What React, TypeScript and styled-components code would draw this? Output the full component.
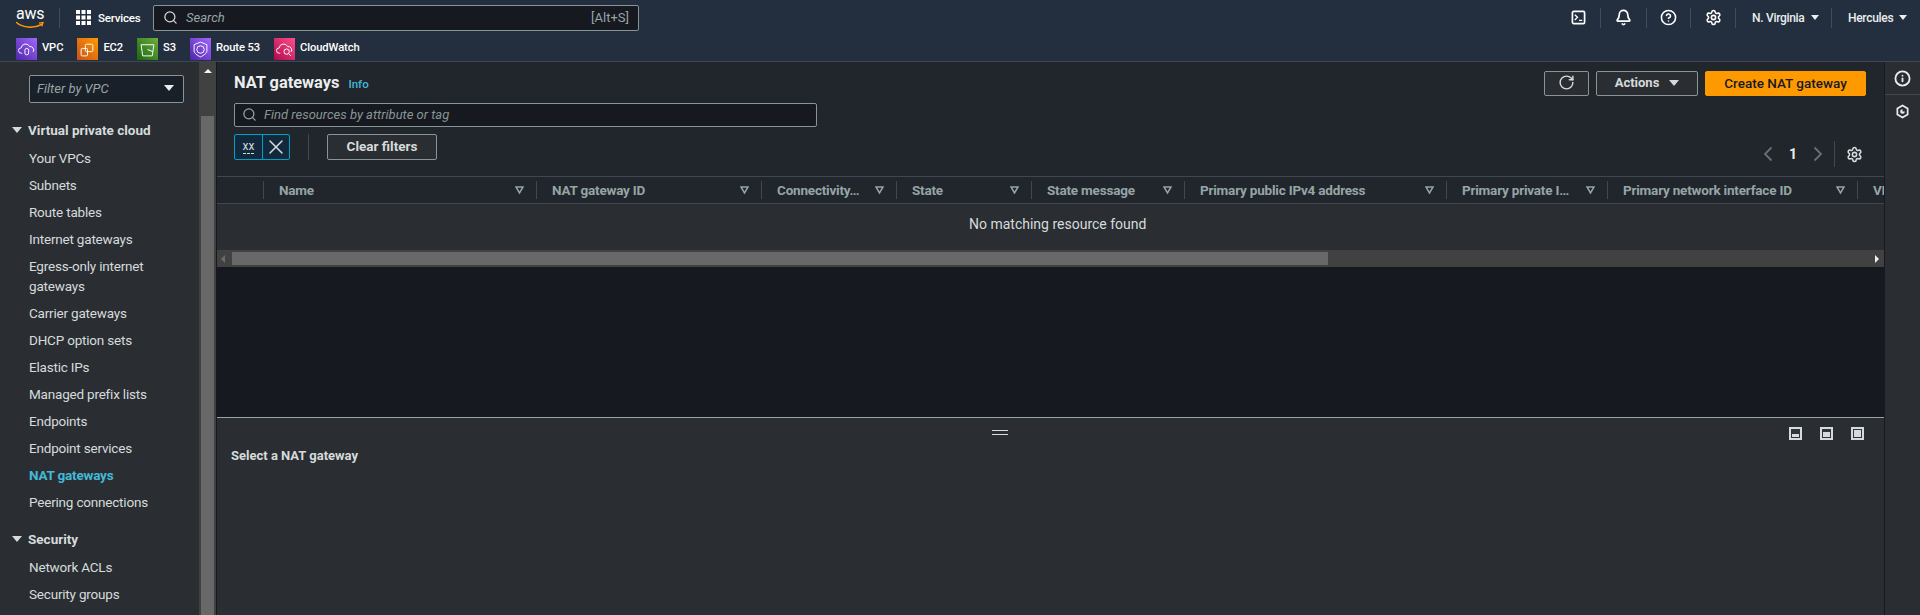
import React from "react";
import styled, { createGlobalStyle } from "styled-components";
import { Search, X, RotateCw, Settings, Bell, CircleHelp, Info } from "lucide-react";

const GlobalStyle = createGlobalStyle`
  html, body { margin: 0; padding: 0; height: 100%; background: #16191f; overflow: hidden; }
  #root { height: 100%; }
  * { box-sizing: border-box; }
`;

const F = `"Roboto", "Liberation Sans", sans-serif`;

const Page = styled.div`
  width: 1920px; height: 615px; display: flex; flex-direction: column; overflow: hidden;
  font-family: ${F}; font-size: 14px; color: #d5dbdb;
`;
const Header = styled.header`
  height: 62px; flex: none; background: #232f3e; border-bottom: 1px solid #414750;
  display: flex; flex-direction: column;
`;
const TopRow = styled.div`
  height: 35px; flex: none; display: flex; align-items: center; padding-left: 16px;
`;
const LogoWrap = styled.div`
  width: 28px; height: 24px; flex: none; padding-top: 1px; display: flex; flex-direction: column; color: #fff;
  font-size: 16px; line-height: 14px; letter-spacing: -0.2px; text-align: center;
  svg { width: 28px; height: 8px; display: block; flex: none; }
`;
const HeaderRule = styled.span<{ $ml?: number }>`
  width: 1px; height: 20px; background: #414d5c; flex: none; margin-left: ${p => p.$ml ?? 0}px;
`;
const ServicesBtn = styled.div`
  display: flex; align-items: center; gap: 7px; margin-left: 16px; font-size: 11.5px; font-weight: 500; color: #fff;
  width: 77px; letter-spacing: -0.2px; flex: none;
`;
const SearchBox = styled.div`
  width: 486px; height: 26px; background: #16191f; border: 1px solid #879596; border-radius: 2px; flex: none;
  display: flex; align-items: center; padding: 0 9px; color: #95a5a6; font-size: 13px; font-style: italic;
  svg { color: #d5dbdb; margin-right: 8px; }
  span:last-child { margin-left: auto; font-style: normal; }
`;
const Spacer = styled.div`flex: 1;`;
const TopIcon = styled.div<{ $w: number }>`
  width: ${p => p.$w}px; flex: none; display: flex; justify-content: center; align-items: center; color: #fff;
`;
const MenuText = styled.div<{ $w: number }>`
  width: ${p => p.$w}px; flex: none; display: flex; padding-left: 16px; align-items: center; gap: 6px; color: #eaeded;
  font-size: 12px; font-weight: 500; letter-spacing: -0.3px;
`;
const Caret = styled.span<{ $s?: number; $c?: string }>`
  display: inline-block; width: 0; height: 0; flex: none;
  border-left: ${p => p.$s ?? 4}px solid transparent; border-right: ${p => p.$s ?? 4}px solid transparent;
  border-top: ${p => (p.$s ?? 4) + 1}px solid ${p => p.$c ?? "#eaeded"};
`;
const Shortcuts = styled.div`
  height: 26px; flex: none; display: flex; align-items: flex-start; padding: 3px 0 0 16px; font-size: 11.2px; color: #fff; font-weight: 500;
  letter-spacing: -0.1px;
`;
const Shortcut = styled.div`
  display: flex; align-items: center; gap: 5px; height: 22px; margin-right: 14px;
  span { padding-bottom: 4px; }
`;
const ServiceIcon = styled.div<{ $a: string; $b: string }>`
  width: 21px; height: 22px; background: linear-gradient(45deg, ${p => p.$a}, ${p => p.$b});
  display: flex; align-items: center; justify-content: center; flex: none;
  svg { width: 17px; height: 17px; }
`;
const Body = styled.div`flex: 1; display: flex; min-height: 0;`;
const Nav = styled.nav`
  width: 199px; flex: none; background: #2a2e33; padding: 13px 0 0 0; overflow: hidden;
`;
const NavFilter = styled.div`
  width: 155px; height: 28px; margin-left: 29px; margin-bottom: 14px; background: #1a2029; border: 1px solid #879596; border-radius: 2px;
  display: flex; align-items: center; justify-content: space-between; padding: 0 9px 2px 7px;
  color: #95a5a6; font-style: italic; font-size: 13px;
`;
const NavGroup = styled.div`
  display: flex; align-items: center; height: 27px; margin-bottom: 1px; padding: 0 0 2px 12px; gap: 6px; font-weight: 700; font-size: 13.5px; color: #d5dbdb;
`;
const NavItem = styled.div<{ $active?: boolean; $two?: boolean }>`
  margin-left: 29px; width: 150px; line-height: 20px; min-height: 27px; padding: ${p => (p.$two ? "3px 0 4px" : "3px 0")};
  font-size: 13.5px; letter-spacing: -0.2px; color: ${p => (p.$active ? "#44b9d6" : "#d5dbdb")}; font-weight: ${p => (p.$active ? 700 : 400)};
`;
const Gap = styled.div`height: 10px;`;
const NavScroll = styled.div`
  width: 17px; flex: none; background: #414141; position: relative; display: flex; flex-direction: column; align-items: center; padding-top: 7px;
  &::after { content: ""; position: absolute; left: 2px; right: 2px; top: 54px; bottom: 0; background: #686868; }
`;
const UpTri = styled.span`
  width: 0; height: 0; border-left: 4px solid transparent; border-right: 4px solid transparent; border-bottom: 4px solid #f1f1f1;
`;
const Main = styled.main`flex: 1; display: flex; flex-direction: column; min-width: 0; border-left: 1px solid #16191f;`;
const ListPane = styled.div`background: #21252c; height: 114px; flex: none; padding: 0 0 0 17px; position: relative; display: flex; flex-direction: column;`;
const TitleRow = styled.div`
  height: 41px; flex: none; display: flex; align-items: flex-start; padding-top: 9px;
`;
const Title = styled.h1`margin: 0; font-size: 16.4px; line-height: 24px; font-weight: 700; color: #eaeded;`;
const InfoLink = styled.a`font-size: 11.5px; color: #44b9d6; margin-left: 9px; margin-top: 6px; font-weight: 500;`;
const Actions = styled.div`
  position: absolute; top: 9px; right: 18px; display: flex; gap: 7px;
`;
const Btn = styled.div<{ $w: number; $primary?: boolean }>`
  width: ${p => p.$w}px; height: 25px; display: flex; align-items: center; justify-content: center; gap: 10px; border-radius: 2px;
  font-size: 13px; font-weight: 700; flex: none; padding-bottom: 2px;
  border: 1px solid ${p => (p.$primary ? "#ff9900" : "#879596")};
  background: ${p => (p.$primary ? "#ff9900" : "#2a2e33")};
  color: ${p => (p.$primary ? "#16191f" : "#d5dbdb")};
  ${p => p.$primary && "font-weight: 500; font-size: 13.5px;"}
`;
const FindBox = styled.div`
  width: 583px; height: 24px; flex: none; background: #16191f; border: 1px solid #879596; border-radius: 2px;
  display: flex; align-items: center; padding: 0 0 1px 7px; gap: 7px; color: #879596; font-style: italic; font-size: 13px;
  svg { color: #95a5a6; flex: none; }
`;
const FilterRow = styled.div`
  height: 26px; flex: none; margin-top: 7px; display: flex; align-items: center;
`;
const Token = styled.div`
  height: 26px; width: 56px; flex: none; display: flex; border: 1px solid #00a1c9; background: #12293b; border-radius: 2px; color: #d5dbdb; font-size: 12px;
`;
const TokenText = styled.div`
  width: 27px; display: flex; align-items: center; justify-content: center;
  span { border-bottom: 1px dashed #d5dbdb; line-height: 13px; }
`;
const TokenClose = styled.div`
  flex: 1; border-left: 1px solid #00a1c9; display: flex; align-items: center; justify-content: center;
`;
const VRule = styled.span`width: 1px; height: 26px; background: #414750; margin: 0 18px; flex: none;`;
const ClearBtn = styled(Btn)`font-size: 13.5px; height: 26px;`;
const Pager = styled.div`
  position: absolute; right: 21px; bottom: 9px; display: flex; align-items: center;
`;
const PageNum = styled.div`font-size: 14px; font-weight: 700; color: #eaeded; width: 40px; text-align: center;`;
const PagerRule = styled.span`width: 1px; height: 26px; background: #414750; margin: 0 11px;`;
const Table = styled.div`flex: none; background: #2a2e33; overflow: hidden;`;
const HeadRow = styled.div`
  height: 28px; background: #21252c; border-top: 1px solid #414750; border-bottom: 1px solid #414750; display: flex; align-items: center; white-space: nowrap; overflow: hidden;
`;
const HeadCell = styled.div<{ $w: number }>`
  width: ${p => p.$w}px; flex: none; height: 18px; display: flex; align-items: center; justify-content: space-between; padding: 0 12px 1px 15px;
  border-right: 1px solid #414750; font-size: 13.5px; font-weight: 700; color: #95a5a6; letter-spacing: -0.2px;
  &:last-child { border-right: none; }
`;
const SortTri = styled.svg`width: 9px; height: 8px; flex: none;`;
const EmptyRow = styled.div`
  height: 46px; padding: 11px 0 0 752px; font-size: 14px; color: #d5dbdb; line-height: 18px; text-align: left;
`;
const HScroll = styled.div`
  height: 17px; background: #414141; position: relative; flex: none; display: flex; align-items: center; justify-content: space-between; padding: 0 5px 0 4px;
`;
const HThumb = styled.div`
  position: absolute; left: 15px; width: 1096px; top: 2px; bottom: 2px; background: #686868;
`;
const Tri = styled.span<{ $right?: boolean; $c: string }>`
  width: 0; height: 0; border-top: 4px solid transparent; border-bottom: 4px solid transparent;
  ${p => (p.$right ? `border-left: 4px solid ${p.$c};` : `border-right: 4px solid ${p.$c};`)}
`;
const Dark = styled.div`flex: none; height: 151px; background: #16191f; border-bottom: 1px solid #95a5a6;`;
const Split = styled.div`flex: 1; background: #2a2e33; position: relative; padding: 30px 14px 0; line-height: 16px; font-size: 13px; font-weight: 700; color: #d5dbdb;`;
const Grab = styled.div`
  position: absolute; top: 12px; left: 775px; width: 16px; height: 5px; border-top: 1px solid #d5dbdb; border-bottom: 1px solid #d5dbdb;
`;
const SplitIcons = styled.div`position: absolute; top: 9px; right: 20px; display: flex; gap: 18px; svg { width: 13px; height: 13px; display: block; }`;
const Rail = styled.aside`width: 36px; flex: none; background: #2a2e33; border-left: 1px solid #16191f; display: flex; flex-direction: column; color: #eaeded;`;
const RailBtn = styled.div`
  height: 33px; display: flex; align-items: center; justify-content: center; border-bottom: 1px solid #414750;
  &:last-child { border-bottom: none; padding-bottom: 1px; }
`;

const columns: [string, number][] = [
  ["", 47], ["Name", 273], ["NAT gateway ID", 225], ["Connectivity…", 135], ["State", 135], ["State message", 153],
  ["Primary public IPv4 address", 262], ["Primary private I…", 161], ["Primary network interface ID", 250], ["VI", 60],
];

const vpcItems = ["Your VPCs", "Subnets", "Route tables", "Internet gateways"];
const vpcItems2 = ["Carrier gateways", "DHCP option sets", "Elastic IPs", "Managed prefix lists", "Endpoints", "Endpoint services"];

const Sort = () => (
  <SortTri viewBox="0 0 9 8"><path d="M1 1h7L4.500 7z" fill="none" stroke="#95a5a6" strokeWidth="1.500" /></SortTri>
);

const PaneIcon = ({ top }: { top: number }) => (
  <svg viewBox="0 0 13 13">
    <rect x="0" y="0" width="13" height="13" fill="#d5dbdb" />
    <rect x="2" y="2" width="9" height="9" fill="#2f343a" />
    <rect x="3" y={top} width="7" height={10 - top} fill="#d5dbdb" />
  </svg>
);

const AwsLogo = () => (
  <LogoWrap>
    <span>aws</span>
    <svg viewBox="0 14 28 8">
      <path d="M.5 15.500C7 21 18 21.500 25.500 17.500" fill="none" stroke="#ff9900" strokeWidth="1.500" strokeLinecap="round" />
      <path d="M23 16.200l4-.6-1.200 3.800" fill="none" stroke="#ff9900" strokeWidth="1.300" />
    </svg>
  </LogoWrap>
);

const GridIcon = () => (
  <svg width="15" height="15" viewBox="0 0 15 15" fill="#fff">
    {[0, 5.500, 11].flatMap(y => [0, 5.500, 11].map(x => <rect key={`${x}-${y}`} x={x} y={y} width="4" height="4" />))}
  </svg>
);

const Cloud = ({ children }: { children?: React.ReactNode }) => (
  <svg viewBox="0 0 16 16" fill="none" stroke="#fff" strokeWidth="0.900">
    <path d="M4 11.500H3a2.500 2.500 0 0 1 0-5 4.200 4.200 0 0 1 8-1.200 3.200 3.200 0 0 1 3.200 5" />
    {children}
  </svg>
);

const Terminal = () => (
  <svg width="15" height="15" viewBox="0 0 16 16" fill="none" stroke="#fff" strokeWidth="1.800">
    <rect x="1.500" y="1.500" width="13" height="13" rx="1.500" />
    <path d="M4 5l3 2.800L4 10.600M8.500 11H12" strokeWidth="1.400" />
  </svg>
);

const HexIcon = () => (
  <svg width="15" height="15" viewBox="0 0 16 16" fill="none" stroke="#eaeded" strokeWidth="1.800">
    <path d="M8 1.500l5.500 3.200v6.600L8 14.500l-5.500-3.200V4.700z" />
    <path d="M8 5.500a2.500 2.500 0 1 0 2.500 2.500H8z" fill="#eaeded" stroke="none" />
  </svg>
);

const Chev = ({ d }: { d: string }) => (
  <svg width="10" height="16" viewBox="0 0 10 16" fill="none" stroke="#687078" strokeWidth="1.800"><path d={d} /></svg>
);

export default function App() {
  return (
    <Page>
      <GlobalStyle />
      <Header>
        <TopRow>
          <AwsLogo />
          <HeaderRule $ml={15} />
          <ServicesBtn><GridIcon /><span>Services</span></ServicesBtn>
          <SearchBox>
            <Search size={15} strokeWidth={2} />
            <span>Search</span>
            <span>[Alt+S]</span>
          </SearchBox>
          <Spacer />
          <TopIcon $w={44}><Terminal /></TopIcon>
          <HeaderRule />
          <TopIcon $w={45}><Bell size={17} strokeWidth={2.400} /></TopIcon>
          <HeaderRule />
          <TopIcon $w={43}><CircleHelp size={17} strokeWidth={2.200} /></TopIcon>
          <HeaderRule />
          <TopIcon $w={44}><Settings size={17} strokeWidth={2.200} /></TopIcon>
          <HeaderRule />
          <MenuText $w={95}>N. Virginia <Caret /></MenuText>
          <HeaderRule />
          <MenuText $w={88}>Hercules <Caret /></MenuText>
        </TopRow>
        <Shortcuts>
          <Shortcut>
            <ServiceIcon $a="#4d27a8" $b="#a166ff"><Cloud><rect x="6.500" y="7" width="3.500" height="6" rx="1.700" /></Cloud></ServiceIcon><span>VPC</span>
          </Shortcut>
          <Shortcut>
            <ServiceIcon $a="#c8511b" $b="#ff9900">
              <svg viewBox="0 0 16 16" fill="none" stroke="#fff" strokeWidth="0.900"><rect x="2" y="7" width="6" height="7" rx="1" /><rect x="6" y="3" width="7" height="7" rx="1" /></svg>
            </ServiceIcon><span>EC2</span>
          </Shortcut>
          <Shortcut>
            <ServiceIcon $a="#1b660f" $b="#6cae3e">
              <svg viewBox="0 0 16 16" fill="none" stroke="#fff" strokeWidth="0.900"><path d="M2 3.500h12l-1.500 10.500h-9z" /><path d="M8 8l5 2" /></svg>
            </ServiceIcon><span>S3</span>
          </Shortcut>
          <Shortcut>
            <ServiceIcon $a="#4d27a8" $b="#a166ff">
              <svg viewBox="0 0 16 16" fill="none" stroke="#fff" strokeWidth="0.900"><path d="M8 1l6 2.500v6c0 2-3 4-6 5.500-3-1.500-6-3.500-6-5.500v-6z" /><circle cx="8" cy="8" r="3.500" /></svg>
            </ServiceIcon><span>Route 53</span>
          </Shortcut>
          <Shortcut>
            <ServiceIcon $a="#b0084d" $b="#ff4f8b"><Cloud><circle cx="10" cy="10" r="2.500" /><path d="M12 12l2 2" /></Cloud></ServiceIcon><span>CloudWatch</span>
          </Shortcut>
        </Shortcuts>
      </Header>
      <Body>
        <Nav>
          <NavFilter><span>Filter by VPC</span><Caret $s={5} /></NavFilter>
          <NavGroup><Caret $s={5} $c="#d5dbdb" />Virtual private cloud</NavGroup>
          {vpcItems.map(i => <NavItem key={i}>{i}</NavItem>)}
          <NavItem $two>Egress-only internet gateways</NavItem>
          {vpcItems2.map(i => <NavItem key={i}>{i}</NavItem>)}
          <NavItem $active>NAT gateways</NavItem>
          <NavItem>Peering connections</NavItem>
          <Gap />
          <NavGroup><Caret $s={5} $c="#d5dbdb" />Security</NavGroup>
          <NavItem>Network ACLs</NavItem>
          <NavItem>Security groups</NavItem>
        </Nav>
        <NavScroll><UpTri /></NavScroll>
        <Main>
          <ListPane>
            <TitleRow><Title>NAT gateways</Title><InfoLink>Info</InfoLink></TitleRow>
            <Actions>
              <Btn $w={45}><RotateCw size={17} strokeWidth={2} /></Btn>
              <Btn $w={102}>Actions <Caret $s={5} $c="#d5dbdb" /></Btn>
              <Btn $w={161} $primary>Create NAT gateway</Btn>
            </Actions>
            <FindBox><Search size={15} strokeWidth={2} /><span>Find resources by attribute or tag</span></FindBox>
            <FilterRow>
              <Token>
                <TokenText><span>xx</span></TokenText>
                <TokenClose><X size={24} strokeWidth={1.500} /></TokenClose>
              </Token>
              <VRule />
              <ClearBtn $w={110}>Clear filters</ClearBtn>
            </FilterRow>
            <Pager>
              <Chev d="M8.500 1.500L2 8l6.500 6.500" />
              <PageNum>1</PageNum>
              <Chev d="M1.500 1.500L8 8l-6.500 6.500" />
              <PagerRule />
              <Settings size={17} strokeWidth={2.200} color="#d5dbdb" />
            </Pager>
          </ListPane>
          <Table>
            <HeadRow>
              {columns.map(([name, w], i) => (
                <HeadCell key={i} $w={w}>
                  <span>{name}</span>
                  {name && name !== "VI" && <Sort />}
                </HeadCell>
              ))}
            </HeadRow>
            <EmptyRow>No matching resource found</EmptyRow>
          </Table>
          <HScroll>
            <HThumb />
            <Tri $c="#6b6b6b" />
            <Tri $right $c="#f1f1f1" />
          </HScroll>
          <Dark />
          <Split>
            <Grab />
            <SplitIcons>
              <PaneIcon top={7} />
              <PaneIcon top={5} />
              <PaneIcon top={3} />
            </SplitIcons>
            Select a NAT gateway
          </Split>
        </Main>
        <Rail>
          <RailBtn><Info size={17} strokeWidth={2.600} /></RailBtn>
          <RailBtn><HexIcon /></RailBtn>
        </Rail>
      </Body>
    </Page>
  );
}
